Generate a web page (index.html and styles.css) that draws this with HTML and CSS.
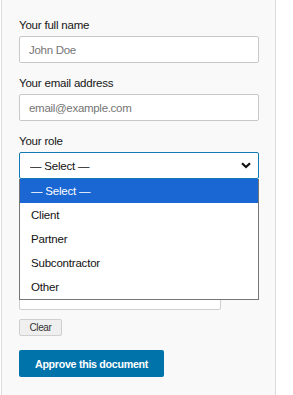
FILE: index.html
```html
<!DOCTYPE html>
<html lang="en">
<head>
<meta charset="utf-8">
<title>Approve document</title>
<link rel="stylesheet" href="styles.css">
</head>
<body>
<div class="panel">
  <div class="field">
    <label class="label" for="name">Your full name</label>
    <input class="input" id="name" type="text" placeholder="John Doe">
  </div>
  <div class="field">
    <label class="label" for="email">Your email address</label>
    <input class="input" id="email" type="email" placeholder="email@example.com">
  </div>
  <div class="field role">
    <label class="label" for="role">Your role</label>
    <div class="select-wrap">
      <select class="select" id="role">
        <option>— Select —</option>
        <option>Client</option>
        <option>Partner</option>
        <option>Subcontractor</option>
        <option>Other</option>
      </select>
      <svg class="chevron" width="10" height="7" viewBox="0 0 10 7"><path d="M1 1.2 L5 5 L9 1.2" fill="none" stroke="#111" stroke-width="2.2"/></svg>
      <ul class="dropdown">
        <li class="opt active">— Select —</li>
        <li class="opt">Client</li>
        <li class="opt">Partner</li>
        <li class="opt">Subcontractor</li>
        <li class="opt">Other</li>
      </ul>
    </div>
  </div>
  <div class="pad"></div>
  <button class="btn-clear" type="button">Clear</button>
  <button class="btn-approve" type="button">Approve this document</button>
</div>
</body>
</html>
```
FILE: styles.css
```css
html, body {
  margin: 0;
  padding: 0;
  background: #fff;
}
body {
  font-family: "Liberation Sans", Arial, sans-serif;
  font-size: 11.5px;
  color: #151515;
}
.panel {
  margin-left: 1px;
  min-height: 395px;
  box-sizing: border-box;
  width: 275px;
  border-left: 1px solid #dcdcdc;
  border-right: 1px solid #dcdcdc;
  background: #f9f9f9;
  padding: 17px 16px 0 17px;
  display: flex;
  flex-direction: column;
  align-items: flex-start;
}
.field {
  display: flex;
  flex-direction: column;
  width: 240px;
  margin-bottom: 12px;
}
.label {
  display: block;
  font-size: 11.5px;
  letter-spacing: -0.2px;
  line-height: 16px;
  margin-bottom: 3px;
  color: #151515;
}
.input {
  box-sizing: border-box;
  width: 240px;
  height: 27px;
  margin: 0;
  border: 1px solid #c8c8c8;
  border-radius: 2px;
  background: #fff;
  padding: 0 9px;
  font-family: "Liberation Sans", Arial, sans-serif;
  font-size: 11.5px;
  letter-spacing: -0.3px;
  color: #151515;
}
.input::placeholder {
  color: #757575;
}
.role {
  margin-bottom: 0;
  position: relative;
  z-index: 2;
}
.select-wrap {
  position: relative;
  width: 240px;
}
.select {
  box-sizing: border-box;
  appearance: none;
  -webkit-appearance: none;
  width: 240px;
  height: 27px;
  margin: 0;
  border: 1px solid #1479b8;
  border-radius: 2px;
  background: #fff;
  padding: 0 10px;
  font-family: "Liberation Sans", Arial, sans-serif;
  font-size: 11.5px;
  letter-spacing: -0.2px;
  color: #111;
  outline: none;
}
.chevron {
  position: absolute;
  right: 8px;
  top: 10px;
}
.dropdown {
  position: absolute;
  left: 0;
  top: 27px;
  box-sizing: border-box;
  width: 240px;
  margin: 0;
  padding: 0;
  list-style: none;
  background: #fff;
  border: 1px solid #767676;
  border-top: none;
}
.opt {
  height: 24px;
  line-height: 25px;
  padding-left: 11px;
  font-size: 11.5px;
  letter-spacing: -0.2px;
  color: #111;
}
.opt.active {
  background: #1a66d3;
  color: #fff;
}
.pad {
  margin-top: 31px;
  box-sizing: border-box;
  width: 202px;
  height: 100px;
  background: #fff;
  border: 1px solid #cfcfcf;
  border-radius: 2px;
}
.btn-clear {
  margin-top: 9px;
  box-sizing: border-box;
  width: 43px;
  height: 17px;
  padding: 0;
  border: 1px solid #cfcfcf;
  border-radius: 2px;
  background: #efefef;
  font-family: "Liberation Sans", Arial, sans-serif;
  font-size: 10px;
  letter-spacing: -0.4px;
  color: #333;
}
.btn-approve {
  margin-top: 14px;
  box-sizing: border-box;
  width: 145px;
  height: 27px;
  padding: 0;
  border: none;
  border-radius: 2px;
  background: #0073aa;
  color: #fff;
  font-family: "Liberation Sans", Arial, sans-serif;
  font-size: 10.7px;
  letter-spacing: -0.3px;
  font-weight: bold;
}
```
